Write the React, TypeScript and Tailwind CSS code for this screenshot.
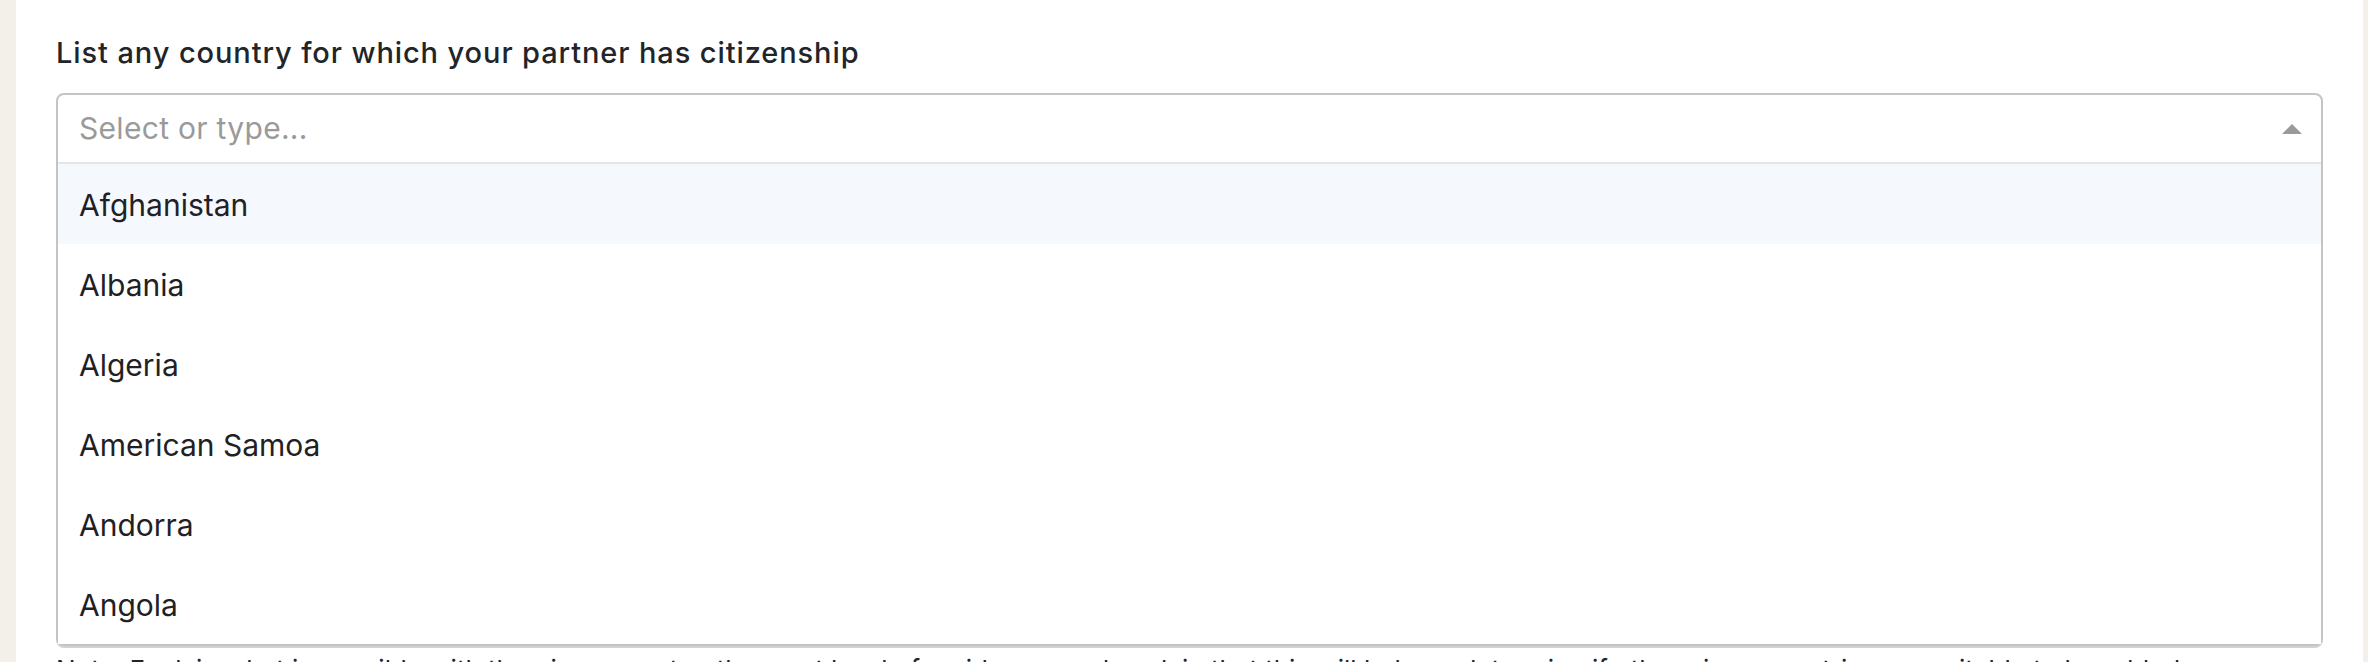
const countries = ['Afghanistan', 'Albania', 'Algeria', 'American Samoa', 'Andorra', 'Angola']

export default function App() {
  return (
    <div
      className="h-[662px] overflow-hidden bg-[#f2f0e8] pl-4 pr-[5px]"
      style={{ fontFamily: 'Inter, "Noto Sans", sans-serif' }}
    >
      <div className="h-full bg-white px-10 pt-[35px]">
        <label className="block text-[29px] font-medium leading-[36px] tracking-[0.9px] text-[#212529]">
          List any country for which your partner has citizenship
        </label>
        <div className="mt-[22px] rounded-[8px] border-2 border-[#c4c4c4] bg-white shadow-[0_2px_0_#d2d2d2]">
          <div className="flex h-[69px] items-center justify-between border-b-2 border-[#e6e6e6] pl-[21px] pr-[19px]">
            <span className="text-[30px] tracking-[0.3px] text-[#9a9a9a]">Select or type...</span>
            <svg width="20" height="10" viewBox="0 0 20 10">
              <path d="M0 10 L10 0 L20 10 Z" fill="#9a9a9a" />
            </svg>
          </div>
          {countries.map((c, i) => (
            <div
              key={c}
              className={`flex h-[80px] items-center pl-[21px] pt-[2px] text-[30px] text-[#1f2124] ${
                i === 0 ? 'bg-[#f5f8fd]' : 'bg-white'
              }`}
            >
              {c}
            </div>
          ))}
        </div>
        <p className="mt-[6px] whitespace-nowrap text-[26px] leading-[36px] text-[#212529]">
          Note: Explain what is possible with the given country, the most level of residence, and explain that this will help us determine if other given countries are suitable to be added.
        </p>
      </div>
    </div>
  )
}
